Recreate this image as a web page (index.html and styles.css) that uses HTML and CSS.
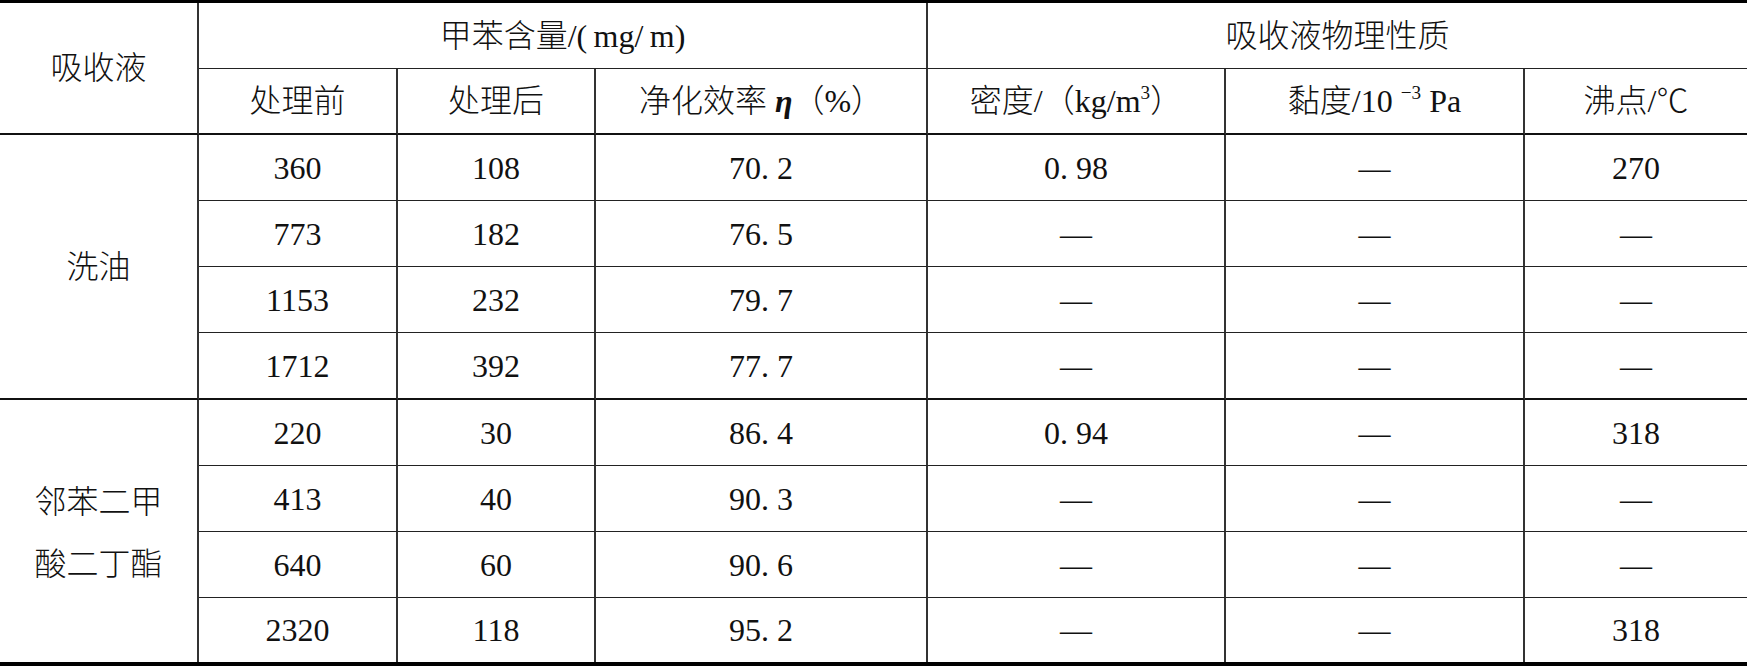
FILE: index.html
```html
<!DOCTYPE html>
<html lang="zh-CN">
<head>
<meta charset="utf-8">
<title>吸收液净化效率</title>
<link rel="stylesheet" href="styles.css">
</head>
<body>
<table class="data-table">
  <colgroup>
    <col class="col-a"><col class="col-b"><col class="col-c"><col class="col-d"><col class="col-e"><col class="col-f"><col class="col-g">
  </colgroup>
  <thead>
    <tr class="row-h1">
      <th rowspan="2" class="label group-end">吸收液</th>
      <th colspan="3">甲苯含量/(&thinsp;mg/&thinsp;m)</th>
      <th colspan="3" class="last">吸收液物理性质</th>
    </tr>
    <tr class="row-h2">
      <th class="group-end">处理前</th>
      <th class="group-end">处理后</th>
      <th class="group-end">净化效率 <i class="eta">η</i>（%）</th>
      <th class="group-end">密度/（kg/m<sup>3</sup>）</th>
      <th class="group-end">黏度/10 <sup>−3</sup> Pa</th>
      <th class="group-end last">沸点/℃</th>
    </tr>
  </thead>
  <tbody>
    <tr>
      <td rowspan="4" class="label group-end">洗油</td>
      <td>360</td><td>108</td><td>70. 2</td><td>0. 98</td><td>—</td><td class="last">270</td>
    </tr>
    <tr>
      <td>773</td><td>182</td><td>76. 5</td><td>—</td><td>—</td><td class="last">—</td>
    </tr>
    <tr>
      <td>1153</td><td>232</td><td>79. 7</td><td>—</td><td>—</td><td class="last">—</td>
    </tr>
    <tr class="row-group-end">
      <td class="group-end">1712</td><td class="group-end">392</td><td class="group-end">77. 7</td><td class="group-end">—</td><td class="group-end">—</td><td class="group-end last">—</td>
    </tr>
    <tr>
      <td rowspan="4" class="label label-two final">邻苯二甲<br>酸二丁酯</td>
      <td>220</td><td>30</td><td>86. 4</td><td>0. 94</td><td>—</td><td class="last">318</td>
    </tr>
    <tr>
      <td>413</td><td>40</td><td>90. 3</td><td>—</td><td>—</td><td class="last">—</td>
    </tr>
    <tr>
      <td>640</td><td>60</td><td>90. 6</td><td>—</td><td>—</td><td class="last">—</td>
    </tr>
    <tr class="row-last">
      <td class="final">2320</td><td class="final">118</td><td class="final">95. 2</td><td class="final">—</td><td class="final">—</td><td class="final last">318</td>
    </tr>
  </tbody>
</table>
</body>
</html>
```

FILE: styles.css
```css
html, body {
  margin: 0;
  padding: 0;
  background: #ffffff;
}

.data-table {
  width: 1747px;
  table-layout: fixed;
  border-collapse: separate;
  border-spacing: 0;
  border-top: 3px solid #000;
  border-bottom: 4px solid #000;
  font-family: "Liberation Serif", "Noto Sans CJK SC", serif;
  font-size: 32px;
  font-weight: 300;
  color: #111;
}

.col-a { width: 199px; }
.col-b { width: 199px; }
.col-c { width: 198px; }
.col-d { width: 332px; }
.col-e { width: 298px; }
.col-f { width: 299px; }
.col-g { width: 222px; }

.data-table th,
.data-table td {
  box-sizing: border-box;
  height: 66px;
  padding: 0;
  text-align: center;
  vertical-align: middle;
  font-weight: 300;
  border-right: 2px solid #333;
  border-bottom: 1px solid #222;
  white-space: nowrap;
  line-height: 1;
}

.data-table .last {
  border-right: none;
}

.data-table .group-end {
  border-bottom: 2px solid #111;
}

.data-table .row-group-end td {
  height: 67px;
}

.data-table .row-last td {
  height: 64px;
}

.data-table .final {
  border-bottom: none;
}

.data-table .label-two {
  line-height: 62px;
  padding-top: 4px;
}

.eta {
  font-weight: 700;
  font-style: italic;
}

sup {
  font-size: 60%;
  line-height: 0;
  vertical-align: 0.7em;
}
```
